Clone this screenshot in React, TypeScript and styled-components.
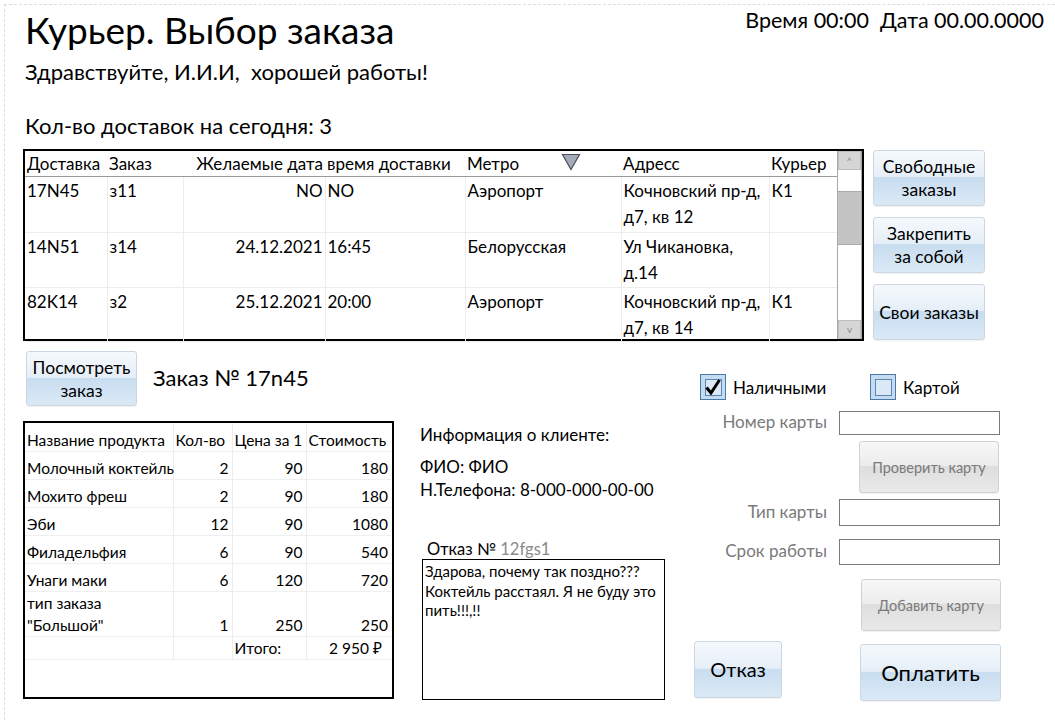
import React from "react";
import styled, { createGlobalStyle } from "styled-components";

const GlobalStyle = createGlobalStyle`
  html, body {
    margin: 0;
    padding: 0;
    background: #ffffff;
  }
  body {
    font-family: Lato, "Noto Sans", sans-serif;
    color: #000000;
  }
`;

const Page = styled.div`
  width: 1055px;
  height: 720px;
  overflow: hidden;
  background: #ffffff;
`;

const Frame = styled.div`
  margin: 4px 0 0 4px;
  height: 716px;
  border-top: 1px dashed #dcdcdc;
  border-left: 1px dashed #dcdcdc;
  padding: 5px 0 0 18px;
  box-sizing: border-box;
`;

const Header = styled.div`
  display: flex;
  justify-content: space-between;
  align-items: flex-start;
  padding-right: 11px;
`;

const Title = styled.h1`
  margin: 0 0 0 2px;
  font-size: 37px;
  line-height: 40px;
  font-weight: 400;
`;

const Clock = styled.div`
  font-size: 21.5px;
  line-height: 26px;
  margin-top: -3px;
  white-space: pre;
`;

const Greeting = styled.div`
  margin: 9px 0 0 2px;
  font-size: 22px;
  line-height: 26px;
  white-space: pre;
`;

const Counter = styled.div`
  margin: 28px 0 0 2px;
  font-size: 22px;
  line-height: 26px;
`;

const TopSection = styled.div`
  display: flex;
  align-items: flex-start;
  margin-top: 10px;
`;

const ListBox = styled.div`
  display: flex;
  width: 841px;
  height: 192px;
  border: 2px solid #000;
  box-sizing: border-box;
`;

const OrdersTable = styled.table`
  width: 812px;
  border-collapse: collapse;
  table-layout: fixed;
  font-size: 17px;
  align-self: flex-start;
`;

const HeadCell = styled.th<{ $align?: string }>`
  font-weight: 400;
  text-align: ${(p) => p.$align || "left"};
  padding: 0 2px 0 2px;
  height: 25px;
  line-height: 25px;
  border-bottom: 1px solid #9a9a9a;
  white-space: nowrap;
  position: relative;
`;

const Cell = styled.td<{ $align?: string; $h: number }>`
  text-align: ${(p) => p.$align || "left"};
  vertical-align: top;
  padding: 1px 2px 0;
  height: ${(p) => p.$h - 1}px;
  line-height: 26px;
  border-right: 1px solid #ececec;
  border-bottom: 1px solid #ececec;
  &:last-child {
    border-right: none;
  }
`;

const SortMark = styled.svg`
  position: absolute;
  left: 96px;
  top: 2px;
`;

const Scrollbar = styled.div`
  width: 26px;
  margin-left: auto;
  display: flex;
  flex-direction: column;
  border-left: 1px solid #a8a8a8;
  border-right: 1px solid #a8a8a8;
  background: #ffffff;
`;

const ScrollArrow = styled.div`
  height: 17px;
  background: #d6d6d6;
  border: 1px solid #bdbdbd;
  color: #8a8a8a;
  font-size: 10px;
  line-height: 17px;
  text-align: center;
`;

const ScrollTrack = styled.div`
  flex: 1;
  display: flex;
  flex-direction: column;
  padding-top: 21px;
`;

const ScrollThumb = styled.div`
  height: 52px;
  background: #c4c4c4;
  border-top: 1px solid #aaaaaa;
  border-bottom: 1px solid #aaaaaa;
`;

const SideButtons = styled.div`
  display: flex;
  flex-direction: column;
  gap: 11px;
  margin: 1px 0 0 9px;
`;

const BlueButton = styled.button<{ $w: number; $h: number; $size?: number }>`
  width: ${(p) => p.$w}px;
  height: ${(p) => p.$h}px;
  padding: 0 2px;
  font-family: Lato, "Noto Sans", sans-serif;
  font-size: ${(p) => p.$size || 17.5}px;
  line-height: 23px;
  color: #000;
  border: 1px solid #cdd7e2;
  border-radius: 3px;
  background: linear-gradient(
    to bottom,
    #f5f9fd 0%,
    #e5eef7 48%,
    #c8ddf0 49%,
    #dbe9f6 100%
  );
  box-shadow: 0 1px 1px rgba(0, 0, 0, 0.06);
  cursor: pointer;
`;

const GrayButton = styled.button`
  width: 140px;
  height: 52px;
  font-family: Lato, "Noto Sans", sans-serif;
  font-size: 14.5px;
  color: #7a7a7a;
  border: 1px solid #d2d2d2;
  border-radius: 3px;
  background: linear-gradient(
    to bottom,
    #f7f7f7 0%,
    #ececec 48%,
    #dedede 49%,
    #e9e9e9 100%
  );
  box-shadow: 0 1px 1px rgba(0, 0, 0, 0.06);
`;

const BottomSection = styled.div`
  display: flex;
  align-items: flex-start;
  margin-top: 10px;
`;

const LeftColumn = styled.div`
  width: 371px;
  display: flex;
  flex-direction: column;
`;

const ViewRow = styled.div`
  display: flex;
  align-items: center;
  padding-left: 3px;
`;

const OrderNumber = styled.div`
  margin-left: 16px;
  font-size: 22px;
  margin-top: -2px;
`;

const ProductsBox = styled.div`
  margin-top: 15px;
  width: 371px;
  height: 278px;
  border: 2px solid #000;
  box-sizing: border-box;
  padding-top: 1px;
`;

const ProductsTable = styled.table`
  width: 366px;
  border-collapse: collapse;
  table-layout: fixed;
  font-size: 15.5px;
`;

const PCell = styled.td<{ $align?: string; $pr?: number; $h?: number }>`
  text-align: ${(p) => p.$align || "left"};
  vertical-align: bottom;
  padding: 0 ${(p) => p.$pr ?? 3}px 0 2px;
  height: ${(p) => p.$h ?? 27}px;
  line-height: 22px;
  white-space: nowrap;
  border-right: 1px solid #ececec;
  border-bottom: 1px solid #efefef;
  &:last-child {
    border-right: none;
  }
`;

const MiddleColumn = styled.div`
  width: 246px;
  margin-left: 26px;
  padding-top: 73px;
  display: flex;
  flex-direction: column;
`;

const InfoTitle = styled.div`
  font-size: 17px;
  line-height: 22px;
`;

const InfoLines = styled.div`
  margin-top: 9px;
  font-size: 17px;
  line-height: 23px;
`;

const RefusalLabel = styled.div`
  margin: 38px 0 0 7px;
  font-size: 16.5px;
  line-height: 20px;
`;

const RefusalId = styled.span`
  color: #8a8a8a;
`;

const RefusalBox = styled.div`
  margin: 0 0 0 2px;
  width: 243px;
  height: 141px;
  border: 1px solid #000;
  box-sizing: border-box;
  padding: 2px 2px;
  font-size: 15px;
  line-height: 19.5px;
`;

const PayColumn = styled.div`
  margin-left: 28px;
  padding-top: 23px;
  width: 310px;
  display: flex;
  flex-direction: column;
`;

const CheckRow = styled.div`
  display: flex;
  align-items: center;
  padding-left: 6px;
`;

const CheckItem = styled.label<{ $w: number }>`
  display: flex;
  align-items: center;
  gap: 7px;
  width: ${(p) => p.$w}px;
  font-size: 17px;
`;

const CheckBox = styled.span`
  width: 26px;
  height: 26px;
  box-sizing: border-box;
  border: 1px solid #4a7aa8;
  background: #c5dbf1;
  display: flex;
  align-items: center;
  justify-content: center;
  position: relative;
`;

const CheckInner = styled.span`
  width: 17px;
  height: 17px;
  box-sizing: border-box;
  border: 1px solid #5a86b0;
  background: #dbe9f7;
`;

const CheckMark = styled.svg`
  position: absolute;
  left: 3px;
  top: 3px;
`;

const FormGrid = styled.div`
  display: grid;
  grid-template-columns: 145px 162px;
  align-items: center;
`;

const FieldLabel = styled.div<{ $mt: number }>`
  margin-top: ${(p) => p.$mt}px;
  padding: 0 12px 3px 0;
  text-align: right;
  font-size: 17px;
  color: #7a7a7a;
  white-space: nowrap;
`;

const FieldInput = styled.div<{ $mt: number; $h: number }>`
  margin-top: ${(p) => p.$mt}px;
  height: ${(p) => p.$h}px;
  width: 161px;
  box-sizing: border-box;
  border: 1px solid #7a7a7a;
  background: #fff;
`;

const ButtonSlot = styled.div<{ $mt: number; $ml: number }>`
  grid-column: 2;
  margin-top: ${(p) => p.$mt}px;
  margin-left: ${(p) => p.$ml}px;
`;

const ActionRow = styled.div`
  display: flex;
  align-items: flex-start;
  margin-top: 10px;
`;

const PayButtonSlot = styled.div`
  margin: 3px 0 0 78px;
`;

const deliveries = [
  ["17N45", "з11", "NO", "NO", "Аэропорт", "Кочновский пр-д, д7, кв 12", "К1"],
  ["14N51", "з14", "24.12.2021", "16:45", "Белорусская", "Ул Чикановка, д.14", ""],
  ["82K14", "з2", "25.12.2021", "20:00", "Аэропорт", "Кочновский пр-д, д7, кв 14", "К1"],
];
const rowHeights = [55, 54, 53];
const colWidths = [82, 76, 142, 140, 156, 148, 68];

const products: [string, string, string, string][] = [
  ["Молочный коктейль", "2", "90", "180"],
  ["Мохито фреш", "2", "90", "180"],
  ["Эби", "12", "90", "1080"],
  ["Филадельфия", "6", "90", "540"],
  ["Унаги маки", "6", "120", "720"],
];

function Check({ checked }: { checked?: boolean }) {
  return (
    <CheckBox>
      <CheckInner />
      {checked && (
        <CheckMark width="18" height="18" viewBox="0 0 18 18">
          <path
            d="M2.5 9.5 L7 15 L15.5 2"
            fill="none"
            stroke="#000"
            strokeWidth="3"
            strokeLinejoin="miter"
          />
        </CheckMark>
      )}
    </CheckBox>
  );
}

export default function App() {
  return (
    <Page>
      <GlobalStyle />
      <Frame>
        <Header>
          <div>
            <Title>Курьер. Выбор заказа</Title>
            <Greeting>Здравствуйте, И.И.И,  хорошей работы!</Greeting>
          </div>
          <Clock>Время 00:00  Дата 00.00.0000</Clock>
        </Header>
        <Counter>Кол-во доставок на сегодня: 3</Counter>

        <TopSection>
          <ListBox>
            <OrdersTable>
              <colgroup>
                {colWidths.map((w, i) => (
                  <col key={i} style={{ width: w }} />
                ))}
              </colgroup>
              <thead>
                <tr>
                  <HeadCell>Доставка</HeadCell>
                  <HeadCell>Заказ</HeadCell>
                  <HeadCell $align="right">Желаемые дата</HeadCell>
                  <HeadCell>время доставки</HeadCell>
                  <HeadCell>
                    Метро
                    <SortMark width="20" height="18" viewBox="0 0 20 18">
                      <path
                        d="M1.5 1.5 H18.5 L10 16.5 Z"
                        fill="#a3abb9"
                        stroke="#4a4f5a"
                        strokeWidth="1.2"
                      />
                    </SortMark>
                  </HeadCell>
                  <HeadCell>Адресс</HeadCell>
                  <HeadCell>Курьер</HeadCell>
                </tr>
              </thead>
              <tbody>
                {deliveries.map((r, i) => (
                  <tr key={r[0]}>
                    {r.map((v, j) => (
                      <Cell key={j} $h={rowHeights[i]} $align={j === 2 ? "right" : "left"}>
                        {v}
                      </Cell>
                    ))}
                  </tr>
                ))}
              </tbody>
            </OrdersTable>
            <Scrollbar>
              <ScrollArrow>^</ScrollArrow>
              <ScrollTrack>
                <ScrollThumb />
              </ScrollTrack>
              <ScrollArrow>v</ScrollArrow>
            </Scrollbar>
          </ListBox>
          <SideButtons>
            <BlueButton $w={112} $h={56}>
              Свободные
              <br />
              заказы
            </BlueButton>
            <BlueButton $w={112} $h={56}>
              Закрепить
              <br />
              за собой
            </BlueButton>
            <BlueButton $w={112} $h={56}>
              Свои заказы
            </BlueButton>
          </SideButtons>
        </TopSection>

        <BottomSection>
          <LeftColumn>
            <ViewRow>
              <BlueButton $w={111} $h={55}>
                Посмотреть
                <br />
                заказ
              </BlueButton>
              <OrderNumber>Заказ № 17n45</OrderNumber>
            </ViewRow>
            <ProductsBox>
              <ProductsTable>
                <colgroup>
                  <col style={{ width: 148 }} />
                  <col style={{ width: 59 }} />
                  <col style={{ width: 74 }} />
                  <col style={{ width: 85 }} />
                </colgroup>
                <tbody>
                  <tr>
                    <PCell>Название продукта</PCell>
                    <PCell>Кол-во</PCell>
                    <PCell>Цена за 1</PCell>
                    <PCell>Стоимость</PCell>
                  </tr>
                  {products.map((p) => (
                    <tr key={p[0]}>
                      <PCell>{p[0]}</PCell>
                      <PCell $align="right">{p[1]}</PCell>
                      <PCell $align="right">{p[2]}</PCell>
                      <PCell $align="right">{p[3]}</PCell>
                    </tr>
                  ))}
                  <tr>
                    <PCell>
                      тип заказа
                      <br />
                      "Большой"
                    </PCell>
                    <PCell $align="right">1</PCell>
                    <PCell $align="right">250</PCell>
                    <PCell $align="right">250</PCell>
                  </tr>
                  <tr>
                    <PCell $h={22} />
                    <PCell $h={22} />
                    <PCell $h={22}>Итого:</PCell>
                    <PCell $h={22} $align="right" $pr={9}>
                      2 950 ₽
                    </PCell>
                  </tr>
                </tbody>
              </ProductsTable>
            </ProductsBox>
          </LeftColumn>

          <MiddleColumn>
            <InfoTitle>Информация о клиенте:</InfoTitle>
            <InfoLines>
              ФИО: ФИО
              <br />
              Н.Телефона: 8-000-000-00-00
            </InfoLines>
            <RefusalLabel>
              Отказ № <RefusalId>12fgs1</RefusalId>
            </RefusalLabel>
            <RefusalBox>
              Здарова, почему так поздно???
              <br />
              Коктейль расстаял. Я не буду это пить!!!,!!
            </RefusalBox>
          </MiddleColumn>

          <PayColumn>
            <CheckRow>
              <CheckItem $w={170}>
                <Check checked />
                Наличными
              </CheckItem>
              <CheckItem $w={120}>
                <Check />
                Картой
              </CheckItem>
            </CheckRow>
            <FormGrid>
              <FieldLabel $mt={11}>Номер карты</FieldLabel>
              <FieldInput $mt={11} $h={24} />
              <ButtonSlot $mt={6} $ml={20}>
                <GrayButton>Проверить карту</GrayButton>
              </ButtonSlot>
              <FieldLabel $mt={6}>Тип карты</FieldLabel>
              <FieldInput $mt={6} $h={27} />
              <FieldLabel $mt={13}>Срок работы</FieldLabel>
              <FieldInput $mt={13} $h={26} />
              <ButtonSlot $mt={14} $ml={22}>
                <GrayButton>Добавить карту</GrayButton>
              </ButtonSlot>
            </FormGrid>
            <ActionRow>
              <BlueButton $w={88} $h={57} $size={20}>
                Отказ
              </BlueButton>
              <PayButtonSlot>
                <BlueButton $w={141} $h={57} $size={22}>
                  Оплатить
                </BlueButton>
              </PayButtonSlot>
            </ActionRow>
          </PayColumn>
        </BottomSection>
      </Frame>
    </Page>
  );
}
